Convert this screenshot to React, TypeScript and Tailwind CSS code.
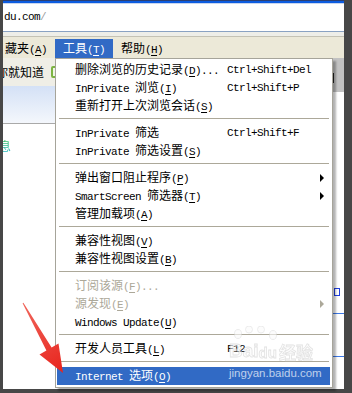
import React from 'react'

const mono = "font-['Liberation_Mono',monospace] text-[11px] tracking-[-0.6px]"

// split text into ascii runs (mono, half width) and CJK runs
function T({ s }: { s: string }) {
  const parts = s.split(/([\x20-\x7e]+)/).filter(Boolean)
  return (
    <>
      {parts.map((p, i) =>
        /^[\x20-\x7e]+$/.test(p) ? (
          <span key={i} className={mono}>
            {p}
          </span>
        ) : (
          <span key={i}>{p}</span>
        ),
      )}
    </>
  )
}

function Acc({ k }: { k: string }) {
  return (
    <span className={mono}>
      (<span className="underline underline-offset-[2px]">{k}</span>)
    </span>
  )
}

type Item =
  | 'sep'
  | {
      t: string
      k?: string
      tail?: string
      sc?: string
      sub?: boolean
      dis?: boolean
      hi?: boolean
    }

const items: Item[] = [
  { t: '删除浏览的历史记录', k: 'D', tail: '...', sc: 'Ctrl+Shift+Del' },
  { t: 'InPrivate 浏览', k: 'I', sc: 'Ctrl+Shift+P' },
  { t: '重新打开上次浏览会话', k: 'S' },
  'sep',
  { t: 'InPrivate 筛选', sc: 'Ctrl+Shift+F' },
  { t: 'InPrivate 筛选设置', k: 'S' },
  'sep',
  { t: '弹出窗口阻止程序', k: 'P', sub: true },
  { t: 'SmartScreen 筛选器', k: 'T', sub: true },
  { t: '管理加载项', k: 'A' },
  'sep',
  { t: '兼容性视图', k: 'V' },
  { t: '兼容性视图设置', k: 'B' },
  'sep',
  { t: '订阅该源', k: 'F', tail: '...', dis: true },
  { t: '源发现', k: 'E', sub: true, dis: true },
  { t: 'Windows Update', k: 'U' },
  'sep',
  { t: '开发人员工具', k: 'L', sc: 'F12' },
  'sep',
  { t: 'Internet 选项', k: 'O', hi: true },
]

function ToolsMenu() {
  return (
    <div className="absolute left-[55px] top-[58px] w-[278px] border border-[#a6a49a] bg-white py-[2px] pl-[1px] pr-[2px] shadow-[3px_3px_2px_rgba(0,0,0,0.3)]">
      {items.map((it, i) =>
        it === 'sep' ? (
          <div key={i} className="h-[9px] pl-[2px] pr-[1px] pt-[3px]">
            <div className="h-[1px] bg-[#aca899]" />
          </div>
        ) : (
          <div
            key={i}
            className={`flex h-[18px] items-center whitespace-nowrap pl-[18px] leading-[18px] ${
              it.hi ? 'bg-[#316ac5] text-white' : it.dis ? 'text-[#aca899]' : 'text-black'
            }`}
          >
            <span className="w-[152px] shrink-0">
              <T s={it.t} />
              {it.k && <Acc k={it.k} />}
              {it.tail && <span className={mono}>{it.tail}</span>}
            </span>
            {it.sc && <span className={mono}>{it.sc}</span>}
            {it.sub && (
              <span className="ml-auto mr-[6px] h-0 w-0 border-y-[4px] border-l-[4px] border-y-transparent border-l-current" />
            )}
          </div>
        ),
      )}
    </div>
  )
}

export default function App() {
  return (
    <div className="relative h-[393px] w-[352px] overflow-hidden bg-[#474747] font-['Noto_Sans_CJK_SC',sans-serif] text-[12px] text-black">
      <div className="ml-[3px] flex h-[389px] w-[341px] flex-col bg-white">
        {/* title bar edge */}
        <div className="h-[1px] bg-[#2b3f73]" />
        <div className="h-[2px] bg-[#0c5ce0]" />
        <div className="h-[1px] bg-[#c9d6ee]" />

        {/* address bar */}
        <div className="flex h-[27px] items-center bg-white pl-[1px]">
          <span className={mono}>du.com</span>
          <span className={`${mono} text-[#a0a0a0]`}>/</span>
        </div>
        <div className="h-[1px] bg-[#8aa2c2]" />
        <div className="h-[4px] bg-[#eeeee8]" />
        <div className="h-[1px] bg-[#c4c2b4]" />

        {/* menu bar */}
        <div className="flex h-[21px] items-start bg-[#ece9d8]">
          <div className="mt-[3px] flex h-[17px] items-center whitespace-nowrap leading-[17px]">
            <span className="w-[52px] shrink-0 pl-[2px]">
              <T s="藏夹" />
              <Acc k="A" />
            </span>
            <span className="w-[58px] shrink-0 bg-[#316ac5] pl-[8px] text-white">
              <T s="工具" />
              <Acc k="T" />
            </span>
            <span className="pl-[8px]">
              <T s="帮助" />
              <Acc k="H" />
            </span>
          </div>
        </div>

        {/* page content under the menu */}
        <div className="flex flex-1">
          <div className="flex w-[52px] flex-col overflow-hidden">
            <div className="flex h-[28px] items-center bg-[#efeee6]">
              <span className="ml-[-7px] whitespace-nowrap">你就知道</span>
              <span className="ml-[7px] h-[12px] w-[10px] shrink-0 rounded-[2px] border-2 border-[#7cb342] bg-[#eef6e4]" />
            </div>
            <div className="h-[37px] bg-linear-to-b from-[#d4e1f6] to-[#f4f7fc]" />
            <div className="h-[1px] bg-[#a9a9a9]" />
            <div className="flex-1 bg-white pt-[15px] leading-[14px]">
              <span className="ml-[-4px] bg-linear-to-b from-[#3fbf3a] to-[#1fb5c9] bg-clip-text text-transparent">息</span>
            </div>
          </div>
          <div className="w-[278px] bg-white" />
          <div className="flex w-[11px] flex-col">
            <div className="h-[34px] bg-[#c2c2c2] pt-[15px]">
              <div className="h-[10px] w-[1px] bg-[#222]" />
            </div>
            <div className="flex-1 bg-white">
              <div className="ml-[1px] mt-[196px] h-[8px] w-[6px] border border-[#2040e0]" />
              <div className="mt-[17px] h-[1px] bg-[#3b78e7]" />
              <div className="mt-[42px] h-[1px] bg-[#3b78e7]" />
            </div>
          </div>
        </div>
      </div>

      <ToolsMenu />

      {/* baidu jingyan watermark */}
      <div className="pointer-events-none absolute left-[228px] top-[326px] h-[40px] w-[96px] opacity-60">
        <svg className="absolute left-0 top-0" width="96" height="40" viewBox="0 0 96 40">
          <g fill="#fbfbfb" stroke="#d8d8d8" strokeWidth="0.8">
            <ellipse cx="10" cy="8" rx="3.5" ry="4.5" />
            <ellipse cx="21" cy="3.5" rx="3.5" ry="3.5" />
            <ellipse cx="33" cy="3.5" rx="3.5" ry="3.5" />
            <ellipse cx="45" cy="9" rx="3.5" ry="4.5" />
          </g>
        </svg>
        <div className="absolute left-[1px] top-[15px] flex items-end whitespace-nowrap font-['Liberation_Sans',sans-serif] font-bold leading-none text-[#fbfbfb] [-webkit-text-stroke:0.8px_#d0d0d0]">
          <span className="text-[19px]">Bai</span>
          <span className="text-[15px]">du</span>
          <span className="ml-[2px] font-['Noto_Sans_CJK_SC',sans-serif] text-[17px]">经验</span>
        </div>
      </div>
      <div className="pointer-events-none absolute left-[229px] top-[366px] font-['Liberation_Sans',sans-serif] text-[11.5px] leading-[14px] text-white/70">
        jingyan.baidu.com
      </div>

      {/* red annotation arrow */}
      <svg className="pointer-events-none absolute left-0 top-0" width="352" height="393" viewBox="0 0 352 393">
        <defs>
          <linearGradient id="arw" x1="22" y1="302" x2="63" y2="373" gradientUnits="userSpaceOnUse">
            <stop offset="0" stopColor="#f0675c" />
            <stop offset="1" stopColor="#e8231c" />
          </linearGradient>
        </defs>
        <polygon
          fill="url(#arw)"
          points="23.4,302.7 51.6,347.5 58.5,343.4 63,373 39.5,354.6 46.4,350.5 22.6,303.3"
        />
      </svg>
    </div>
  )
}
